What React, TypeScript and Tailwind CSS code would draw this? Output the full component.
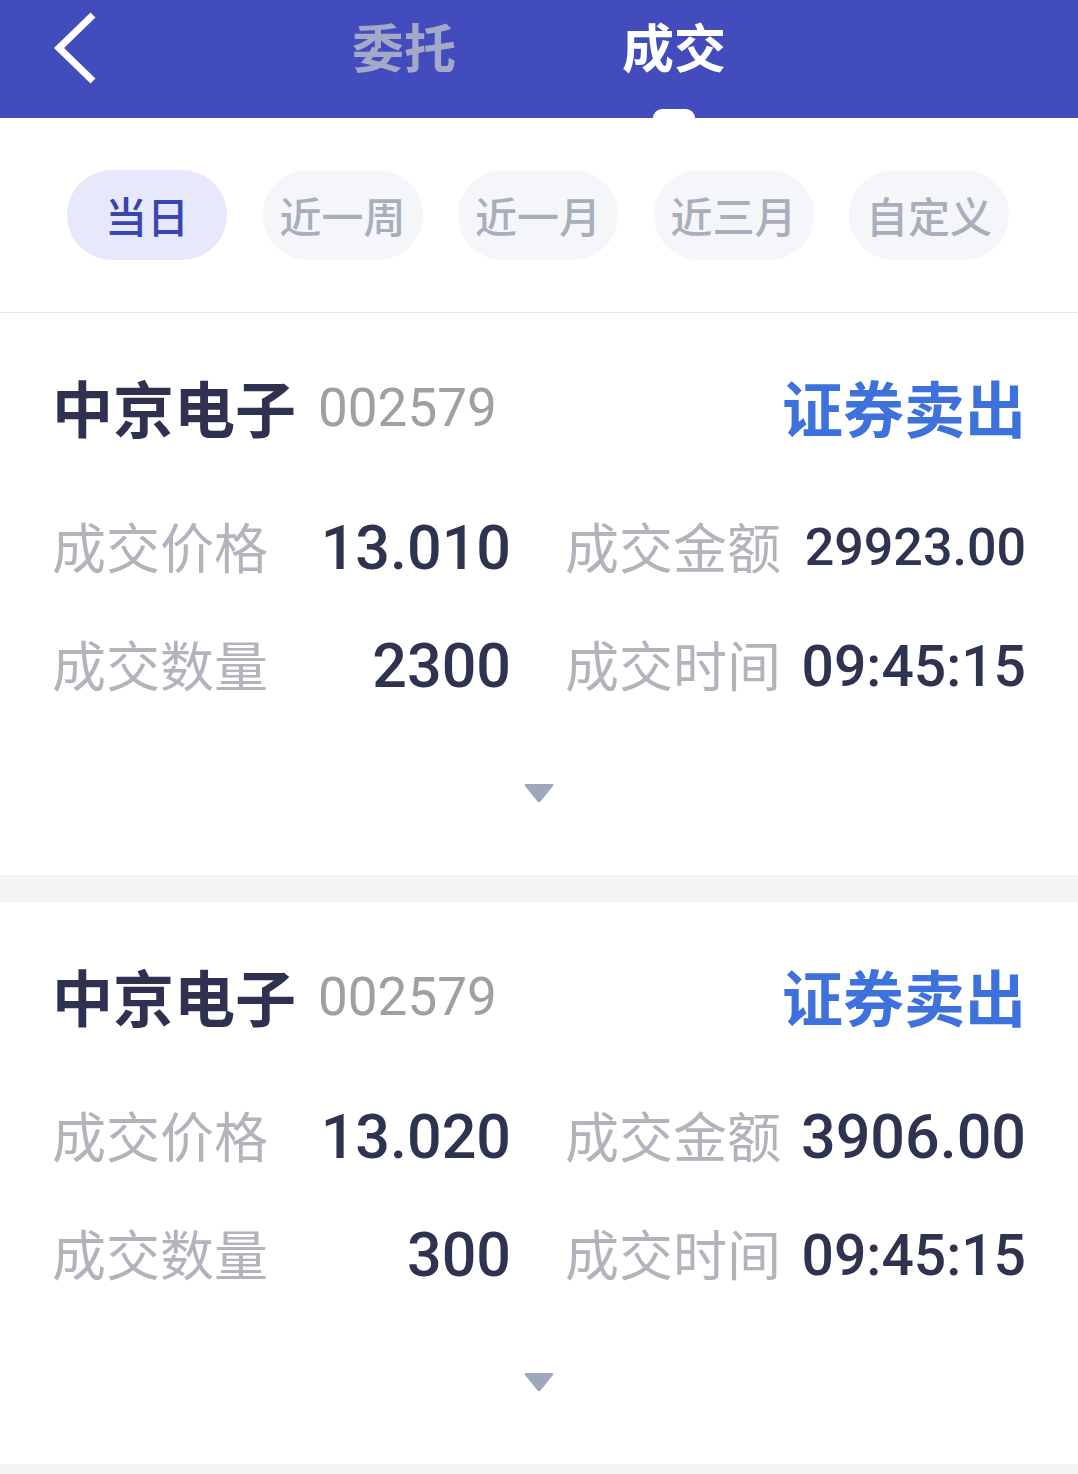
import React from "react";

const cjk = { fontFamily: '"Noto Sans CJK SC", "Noto Sans", sans-serif' };
const num = { fontFamily: 'Roboto, "Noto Sans", sans-serif' };

type Trade = {
  price: string;
  priceSize: string;
  amount: string;
  amountSize: string;
  qty: string;
  qtySize: string;
  time: string;
  timeSize: string;
};

const trades: Trade[] = [
  { price: "13.010", priceSize: "text-[61px]", amount: "29923.00", amountSize: "text-[52px]", qty: "2300", qtySize: "text-[61px]", time: "09:45:15", timeSize: "text-[57px]" },
  { price: "13.020", priceSize: "text-[61px]", amount: "3906.00", amountSize: "text-[61px]", qty: "300", qtySize: "text-[61px]", time: "09:45:15", timeSize: "text-[57px]" },
];

function Row({ l1, v1, s1, l2, v2, s2 }: { l1: string; v1: string; s1: string; l2: string; v2: string; s2: string }) {
  return (
    <div className="flex h-[90px] items-center px-[52px]">
      <div className="flex w-[460px] items-center justify-between">
        <span className="-mt-[5px] text-[54px] leading-none text-[#b2b4bc]" style={cjk}>{l1}</span>
        <span className={`${s1} font-medium leading-none text-[#2e3350]`} style={num}>{v1}</span>
      </div>
      <div className="ml-[54px] flex w-[462px] items-center justify-between">
        <span className="-mt-[5px] text-[54px] leading-none text-[#b2b4bc]" style={cjk}>{l2}</span>
        <span className={`${s2} font-medium leading-none text-[#2e3350]`} style={num}>{v2}</span>
      </div>
    </div>
  );
}

function Card({ t }: { t: Trade }) {
  return (
    <div className="flex flex-col bg-white">
      <div className="flex h-[190px] items-center justify-between pl-[52px] pr-[52px]">
        <div className="flex items-center">
          <span className="-mt-[4px] text-[61px] font-bold leading-none text-[#2e3150]" style={cjk}>中京电子</span>
          <span className="ml-[22px] text-[53px] leading-none text-[#a0a0a0]" style={num}>002579</span>
        </div>
        <span className="-mt-[4px] text-[61px] font-bold leading-none text-[#3d72dc]" style={cjk}>证券卖出</span>
      </div>
      <Row l1="成交价格" v1={t.price} s1={t.priceSize} l2="成交金额" v2={t.amount} s2={t.amountSize} />
      <div className="h-[28px]" />
      <Row l1="成交数量" v1={t.qty} s1={t.qtySize} l2="成交时间" v2={t.time} s2={t.timeSize} />
      <div className="flex justify-center pb-[72px] pt-[72px]">
        <svg width="30" height="20" viewBox="0 0 30 20">
          <path d="M2 1 L28 1 Q30 1 29 3 L16.5 18.5 Q15 20 13.5 18.5 L1 3 Q0 1 2 1 Z" fill="#9fa7bd" />
        </svg>
      </div>
    </div>
  );
}

export default function App() {
  const chips = ["当日", "近一周", "近一月", "近三月", "自定义"];
  return (
    <div className="h-[1474px] w-[1078px] overflow-hidden bg-white">
      <div className="flex h-[118px] items-start bg-[#434cbd]">
        <div className="w-[352px] pl-[52px] pt-[12px]">
          <svg width="48" height="72" viewBox="0 0 48 72">
            <polyline points="41,3 7,36 41,69" fill="none" stroke="#ffffff" strokeWidth="7" strokeLinejoin="miter" />
          </svg>
        </div>
        <div className="flex h-[118px] w-[104px] flex-col items-center pt-[20px]">
          <span className="text-[52px] font-bold leading-none text-[#a4a9c9]" style={cjk}>委托</span>
        </div>
        <div className="ml-[166px] flex h-[118px] w-[104px] flex-col items-center justify-between pt-[20px]">
          <span className="text-[52px] font-bold leading-none text-white" style={cjk}>成交</span>
          <div className="h-[9px] w-[42px] rounded-t-full rounded-b-[3px] bg-white" />
        </div>
      </div>
      <div className="flex gap-[35.5px] border-b border-[#e9e9ec] pb-[52px] pl-[67px] pt-[52px]">
        {chips.map((c, i) => (
          <div
            key={c}
            className={
              i === 0
                ? "flex h-[90px] w-[160px] items-center justify-center rounded-full bg-[#e6e9fb]"
                : "flex h-[90px] w-[160px] items-center justify-center rounded-full bg-[#f5f6fa]"
            }
          >
            <span
              className={
                i === 0
                  ? "text-[42px] font-medium leading-none text-[#3a45b1]"
                  : "text-[42px] font-medium leading-none text-[#a9aebb]"
              }
              style={cjk}
            >
              {c}
            </span>
          </div>
        ))}
      </div>
      <Card t={trades[0]} />
      <div className="h-[27px] bg-[#f3f4f6]" />
      <Card t={trades[1]} />
      <div className="h-[27px] bg-[#f3f4f6]" />
    </div>
  );
}
